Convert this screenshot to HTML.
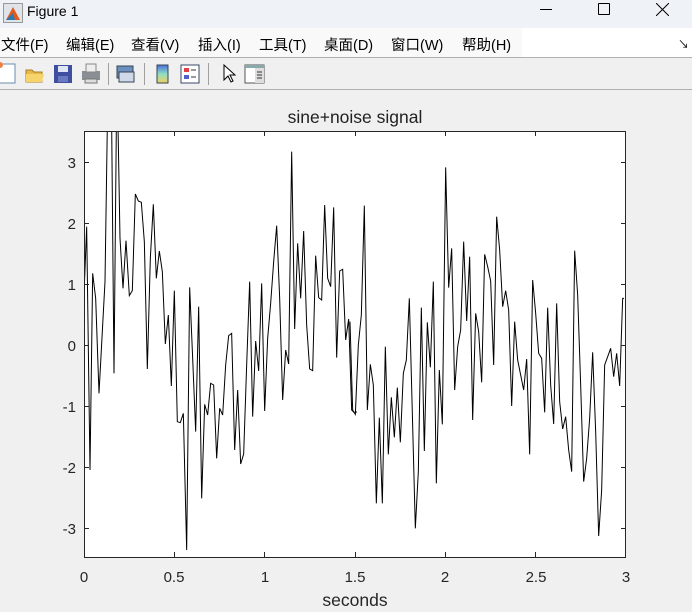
<!DOCTYPE html>
<html><head><meta charset="utf-8"><style>
body{margin:0;width:692px;height:612px;overflow:hidden;background:#f0f0f0;font-family:"Liberation Sans","Noto Sans CJK SC",sans-serif;position:relative}
.tb{position:absolute;left:0;top:0;width:692px;height:28px;background:#eff3f8}
.menu{position:absolute;left:0;top:28px;width:692px;height:29px;background:#fff;border-bottom:1px solid #b0b0b0}
.menu .l{position:absolute;left:0;top:0;width:522px;height:29px;background:#f9f9f9}
.menu span{position:absolute;top:6px;font-size:14.5px;color:#000}
.tool{position:absolute;left:0;top:58px;width:692px;height:31px;background:#f0f0f0;border-bottom:1px solid #b0b0b0}
.sep{position:absolute;top:5px;width:1px;height:22px;background:#a0a0a0}
</style></head><body>
<div class="tb">
<svg style="position:absolute;left:3px;top:3px" width="20" height="20"><rect x="0.5" y="0.5" width="19" height="19" fill="#dfe4ea" stroke="#999"/><path d="M3 17 L10 4 L17 17 Z" fill="#e55a1c"/><path d="M3 17 L10 10 L12 17Z" fill="#2a7ab8"/></svg>
<span style="position:absolute;left:27px;top:3px;font-size:14px">Figure 1</span>
<div style="position:absolute;left:540px;top:9px;width:12px;height:1px;background:#000"></div>
<div style="position:absolute;left:598px;top:3px;width:10px;height:10px;border:1px solid #000;border-radius:1px"></div>
<svg style="position:absolute;left:656px;top:3px" width="13" height="13"><path d="M0 0L13 13M13 0L0 13" stroke="#000" stroke-width="1"/></svg>
</div>
<div class="menu"><div class="l"></div>
<span style="left:1px">文件(F)</span><span style="left:66px">编辑(E)</span><span style="left:131px">查看(V)</span><span style="left:198px">插入(I)</span><span style="left:259px">工具(T)</span><span style="left:324px">桌面(D)</span><span style="left:391px">窗口(W)</span><span style="left:462px">帮助(H)</span>
<span style="left:678px;font-size:11px;top:8px">↘</span>
</div>
<div class="tool">
<svg width="270" height="31" style="position:absolute;left:0;top:0">
<rect x="-1" y="6" width="16" height="19" fill="#fff" stroke="#6a8bb0"/><circle cx="0" cy="7" r="3" fill="#f08040"/>
<path d="M26 12h6l2 2h8v10H26z" fill="#e9b949" stroke="#a88020"/><path d="M26 16h18l-2 8H26z" fill="#f6d36b"/>
<rect x="54" y="7" width="18" height="18" fill="#3d4f9e"/><rect x="58" y="8" width="10" height="6" fill="#dfe6f5"/><rect x="58" y="18" width="10" height="6" fill="#6978c0"/>
<rect x="82" y="13" width="18" height="9" fill="#8a8f96"/><rect x="86" y="6" width="10" height="8" fill="#eee" stroke="#888"/><rect x="85" y="21" width="12" height="4" fill="#ddd" stroke="#777"/>
<rect x="117" y="8" width="16" height="12" fill="#6b8fbe" stroke="#345"/><rect x="119" y="14" width="15" height="10" fill="#cfd8e6" stroke="#345"/>
<defs><linearGradient id="g" x1="0" y1="0" x2="0" y2="1"><stop offset="0" stop-color="#4a6de0"/><stop offset=".5" stop-color="#8fe0c0"/><stop offset="1" stop-color="#f0d060"/></linearGradient></defs>
<rect x="157" y="7" width="11" height="18" fill="url(#g)" stroke="#345"/>
<rect x="181" y="7" width="18" height="18" fill="#fff" stroke="#3a4a6a"/><rect x="184" y="10" width="5" height="4" fill="#e04040"/><rect x="184" y="17" width="5" height="4" fill="#5060d0"/><path d="M191 12h5M191 19h5" stroke="#333"/>
<path d="M224 7v15l4-4 3 6 2-1-3-6h5z" fill="#fff" stroke="#000"/>
<rect x="245" y="7" width="19" height="18" fill="#fff" stroke="#555"/><rect x="245" y="7" width="19" height="3" fill="#8aa"/><rect x="255" y="10" width="9" height="15" fill="#ddd"/><path d="M257 14h5M257 17h5M257 20h5" stroke="#333"/>
</svg>
<div class="sep" style="left:108px"></div><div class="sep" style="left:144px"></div><div class="sep" style="left:208px"></div>
</div>
<svg width="692" height="612" style="position:absolute;left:0;top:0" font-family="Liberation Sans, sans-serif">
<rect x="84" y="131" width="542" height="426" fill="#fff"/>
<text x="355" y="123" font-size="17.5" text-anchor="middle" fill="#222">sine+noise signal</text>
<defs><clipPath id="c"><rect x="84" y="131" width="542" height="426"/></clipPath></defs>
<g clip-path="url(#c)" fill="none" stroke="#000" stroke-width="1">
<polyline transform="translate(80,125) scale(0.33333)" vector-effect="non-scaling-stroke" points="10,560 20,305 30,1035 38,445 47,520 57,805 75,470 82,0 88,-200 95,0 102,745 110,-100 114,0 120,340 129,490 138,347 148,512 157,497 166,207 175,228 184,232 193,350 202,732 211,400 220,238 229,460 238,378 247,440 256,657 265,570 274,783 283,497 292,890 301,893 310,865 320,1275 329,487 338,700 347,920 356,545 365,1120 374,838 383,870 392,775 401,780 410,1000 419,850 428,870 437,720 446,632 455,625 464,975 473,795 482,1017 491,987 500,720 509,470 518,875 527,648 536,738 545,475 554,858 563,640 572,535 581,410 590,302 599,520 608,825 617,675 626,717 635,80 644,612 653,355 662,520 671,318 680,600 689,732 698,737 707,392 716,518 725,525 734,240 743,460 752,485 761,247 770,698 779,438 788,433 797,645 806,582 815,855 825,865 830,860"/>
<polyline transform="translate(350,125) scale(0.33333)" vector-effect="non-scaling-stroke" points="0,590 8,855 16,868 25,660 34,570 43,242 52,855 61,718 70,780 79,1135 88,878 97,1135 106,665 115,988 124,817 133,937 142,788 151,952 160,745 169,705 178,520 187,865 196,1210 205,1040 214,548 223,978 232,592 241,727 250,470 259,1075 268,735 277,898 287,127 296,488 305,370 314,795 323,665 332,615 341,350 350,588 359,395 368,885 377,565 386,620 395,772 404,388 413,425 422,468 431,720 440,275 449,375 458,545 467,497 476,555 485,843 494,590 503,705 512,750 521,795 530,702 539,988 548,465 557,565 566,685 575,700 584,862 593,548 602,780 611,897 620,535 629,830 638,912 647,875 656,975 665,1040 674,377 683,510 692,780 701,1070 710,1000 719,880 728,682 737,920 746,1233 755,1095 764,720 773,695 782,670 791,755 800,685 809,783 818,520 822,520"/>
</g>
<g stroke="#262626" stroke-width="1" fill="none">
<rect x="84.5" y="131.5" width="541" height="426"/>
<path d="M174.5 557v-5M264.5 557v-5M355.5 557v-5M445.5 557v-5M535.5 557v-5M174.5 131v5M264.5 131v5M355.5 131v5M445.5 131v5M535.5 131v5"/>
<path d="M84 162.5h5M84 223.5h5M84 284.5h5M84 345.5h5M84 406.5h5M84 467.5h5M84 528.5h5M626 162.5h-5M626 223.5h-5M626 284.5h-5M626 345.5h-5M626 406.5h-5M626 467.5h-5M626 528.5h-5"/>
</g>
<g font-size="15" fill="#262626" text-anchor="end">
<text x="76" y="168">3</text><text x="76" y="229">2</text><text x="76" y="290">1</text><text x="76" y="351">0</text><text x="76" y="412">-1</text><text x="76" y="473">-2</text><text x="76" y="534">-3</text>
</g>
<g font-size="15" fill="#262626" text-anchor="middle">
<text x="84" y="582">0</text><text x="174" y="582">0.5</text><text x="265" y="582">1</text><text x="355" y="582">1.5</text><text x="445" y="582">2</text><text x="536" y="582">2.5</text><text x="626" y="582">3</text>
<text x="355" y="606" font-size="17.5">seconds</text>
</g>
</svg>
</body></html>
